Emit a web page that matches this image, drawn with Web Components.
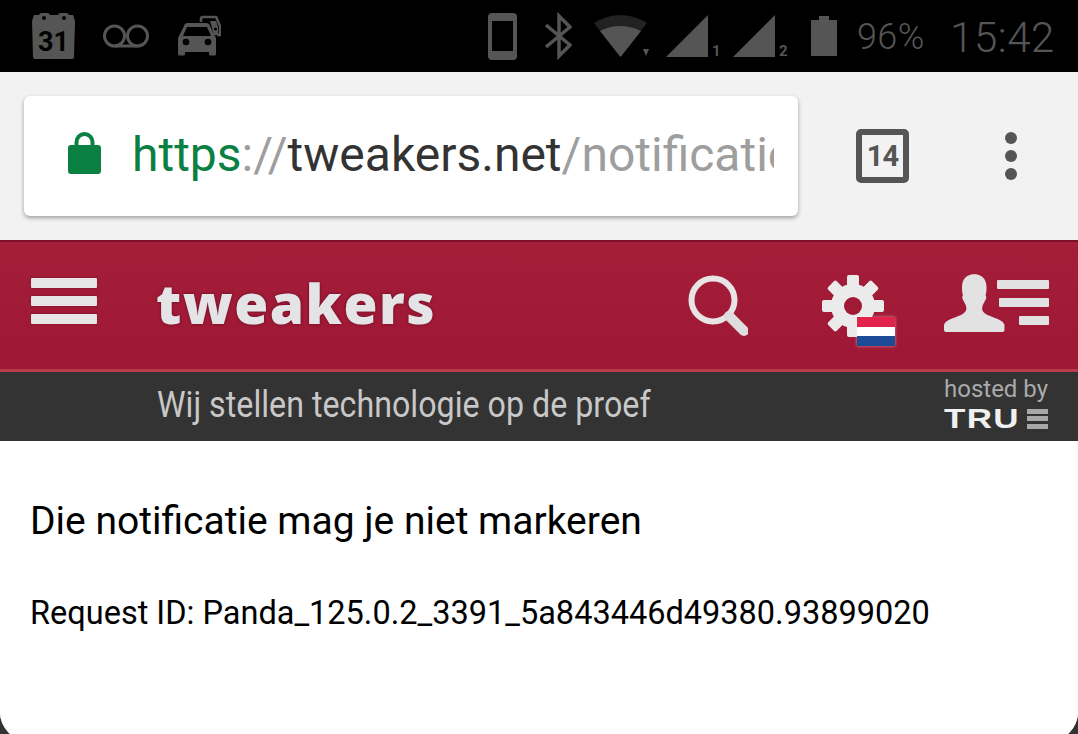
<!DOCTYPE html>
<html lang="nl">
<head>
<meta charset="utf-8">
<title>Tweakers</title>
<style>
html, body { margin: 0; height: 734px; overflow: hidden; background: #333; }
</style>
</head>
<body>
<app-screen>
    <status-bar></status-bar>
    <browser-toolbar></browser-toolbar>
    <site-header></site-header>
    <site-tagline>Wij stellen technologie op de proef</site-tagline>
    <error-message request-id="Panda_125.0.2_3391_5a843446d49380.93899020">Die notificatie mag je niet markeren</error-message>
</app-screen>

<script>
const define = (name, html) => {
    customElements.define(name, class extends HTMLElement {
        constructor() {
            super();
            this.attachShadow({mode: 'open'}).innerHTML = html;
        }
    });
};

define('app-screen', `
    <style>
    :host {
        display: flex;
        flex-direction: column;
        height: 741px;
        background: #fff;
        border-radius: 0 0 29px 29px;
        overflow: hidden;
        font-family: Roboto, "Liberation Sans", sans-serif;
    }
    </style>
    <slot></slot>
`);

define('status-bar', `
    <style>
    :host {
        display: flex;
        align-items: flex-start;
        height: 72px;
        background: #000;
        color: #555;
        flex: none;
    }
    svg { display: block; flex: none; fill: #555; }
    .cal-num { font: 700 27px Roboto, sans-serif; fill: #000; }
    .sim { font: 700 15px Roboto, sans-serif; fill: #555; }
    .left { display: flex; padding-left: 31px; }
    .right { display: flex; margin-left: auto; }
    .pct { font-size: 36px; font-weight: 300; line-height: 74px; margin-left: 20px; width: 68px; letter-spacing: .4px; }
    .time { font-size: 42px; font-weight: 300; line-height: 76px; margin-left: 25px; margin-right: 23px; letter-spacing: .6px; }
    </style>
    <div class="left">
        <svg width="46" height="72" viewBox="0 0 46 72" style="margin-right:26px">
            <path d="M3 15h5a3 3 0 0 1 3-2h5a3 3 0 0 1 3 2h8a3 3 0 0 1 3-2h5a3 3 0 0 1 3 2h4l2 6-1 36a2 2 0 0 1-2 2H4a2 2 0 0 1-2-2L1 21z"/>
            <circle cx="13" cy="18" r="2" fill="#000"/><circle cx="33" cy="18" r="2" fill="#000"/>
            <text class="cal-num" x="7" y="51">31</text>
        </svg>
        <svg width="46" height="72" viewBox="0 0 46 72" style="margin-right:28px" fill="none">
            <circle cx="11.500" cy="36" r="10" fill="none" stroke="#555" stroke-width="3"/>
            <circle cx="34.500" cy="36" r="10" fill="none" stroke="#555" stroke-width="3"/>
            <rect x="11.500" y="44.500" width="23" height="3"/>
        </svg>
        <svg width="44" height="72" viewBox="0 0 44 72">
            <path d="M1 54V38l6-12a4 4 0 0 1 4-3h18a4 4 0 0 1 4 3l6 12v16a1.500 1.500 0 0 1-1.500 1.500h-4a1.500 1.500 0 0 1-1.500-1.500v-2H8v2a1.500 1.500 0 0 1-1.500 1.500h-4A1.500 1.500 0 0 1 1 54z"/>
            <path d="M6 36l4-9h20l4 9z" fill="#000"/>
            <circle cx="9" cy="42" r="3.300" fill="#000"/><circle cx="31" cy="42" r="3.300" fill="#000"/>
            <path d="M24 22v-3a2 2 0 0 1 2-2h12a2 2 0 0 1 2 2l3 7v9h-3" fill="none" stroke="#555" stroke-width="2.500"/>
            <path d="M33 21h6l2 6v8h-4z"/>
            <circle cx="38.500" cy="29" r="1.500" fill="#000"/>
        </svg>
    </div>
    <div class="right">
        <svg width="30" height="72" viewBox="0 0 30 72" style="margin-right:26px">
            <rect x="0" y="13" width="29" height="47" rx="4"/>
            <rect x="4" y="21" width="21" height="30" fill="#000"/>
        </svg>
        <svg width="28" height="72" viewBox="0 0 28 72" style="margin-right:22px" fill="none">
            <path d="M2 25l24 20-11 11V16l11 11L2 47" fill="none" stroke="#555" stroke-width="3.500"/>
        </svg>
        <svg width="55" height="72" viewBox="0 0 55 72" style="margin-right:17px">
            <path d="M0 23Q26 7 53 23L26.500 57z" fill="#222"/>
            <path d="M6 31Q26 21 47 31L26.500 57z"/>
            <path d="M49 49h6l-3 7z"/>
        </svg>
        <svg width="56" height="72" viewBox="0 0 56 72" style="margin-right:11px">
            <path d="M0 57L42 15v42z"/>
            <text class="sim" x="46" y="56">1</text>
        </svg>
        <svg width="56" height="72" viewBox="0 0 56 72" style="margin-right:22px">
            <path d="M0 57L42 15v42z"/>
            <text class="sim" x="46" y="56">2</text>
        </svg>
        <svg width="26" height="72" viewBox="0 0 26 72">
            <path d="M8 16h10v4h8v36H0V20h8z"/>
        </svg>
        <span class="pct">96%</span>
        <span class="time">15:42</span>
    </div>
`);

define('browser-toolbar', `
    <style>
    :host {
        display: flex;
        align-items: center;
        height: 168px;
        flex: none;
        box-sizing: border-box;
        padding-left: 24px;
        background: #f2f2f2;
    }
    .omnibox {
        display: flex;
        align-items: center;
        width: 774px;
        height: 120px;
        box-sizing: border-box;
        padding: 0 24px 0 44px;
        background: #fff;
        border-radius: 6px;
        box-shadow: 0 2px 4px rgba(0,0,0,.35);
    }
    .lock { flex: none; margin: -6px 31px 0 0; }
    .url {
        flex: 1;
        overflow: hidden;
        white-space: nowrap;
        font-size: 48px;
        line-height: 118px;
        margin-bottom: 2px;
        color: #9e9e9e;
    }
    .https { color: #0b8043; }
    .host { color: #333; }
    .tabs {
        flex: none;
        box-sizing: border-box;
        width: 53px;
        height: 54px;
        margin-left: 58px;
        border: 6px solid #555;
        border-radius: 5px;
        color: #555;
        font-weight: 700;
        font-size: 29px;
        line-height: 42px;
        text-align: center;
        letter-spacing: -1px;
    }
    .menu {
        flex: none;
        display: flex;
        flex-direction: column;
        gap: 6px;
        margin-left: 96px;
    }
    .menu i { width: 12px; height: 12px; border-radius: 50%; background: #555; }
    </style>
    <div class="omnibox">
        <svg class="lock" width="33" height="42" viewBox="0 0 33 42">
            <path fill="#0b8043" d="M3 13h3.500V10a10 10 0 0 1 20 0v3H30a3 3 0 0 1 3 3v23a3 3 0 0 1-3 3H3a3 3 0 0 1-3-3V16a3 3 0 0 1 3-3zm7.500 0h12V10a6 6 0 0 0-12 0z"/>
        </svg>
        <div class="url"><span class="https">https</span>://<span class="host">tweakers.net</span>/notificaties</div>
    </div>
    <div class="tabs">14</div>
    <div class="menu"><i></i><i></i><i></i></div>
`);

define('site-header', `
    <style>
    :host {
        display: flex;
        align-items: center;
        height: 132px;
        flex: none;
        box-sizing: border-box;
        background: linear-gradient(#a41e3a, #9e1734);
        border-top: 2px solid #7c1028;
        border-bottom: 3px solid #b73c4b;
    }
    svg { display: block; flex: none; }
    .burger {
        display: flex;
        flex-direction: column;
        gap: 8px;
        width: 66px;
        margin: -10px 59px 0 31px;
    }
    .burger i { height: 10px; background: #e6e6e6; border-radius: 1px; box-shadow: 0 0 2px rgba(70,0,20,.6); }
    .logo {
        width: 480px;
        font-family: "Open Sans", sans-serif;
        font-weight: 800;
        font-size: 55px;
        line-height: 60px;
        letter-spacing: 1.5px;
        color: #e4e4e6;
        text-shadow: 0 0 3px rgba(70,0,20,.7);
        margin-top: -6px;
        margin-right: 52px;
    }
    .gear { position: relative; width: 74px; height: 74px; margin: 10px 47px 0 74px; }
    .flag {
        position: absolute;
        left: 35px;
        top: 43px;
        width: 38px;
        height: 29px;
        box-shadow: 0 0 3px rgba(255,255,255,.5);
        background: linear-gradient(#e2244c 33%, #fff 33%, #fff 66%, #1c4c96 66%);
    }
    .person { margin-top: -4px; }
    </style>
    <div class="burger"><i></i><i></i><i></i></div>
    <div class="logo">tweakers</div>
    <svg class="search" width="60" height="62" viewBox="0 0 60 62" fill="none">
        <circle cx="25" cy="25" r="21.500" stroke="#e8e4e6" stroke-width="6"/>
        <path d="M41 41L56 56" stroke="#e0dcde" stroke-width="10" stroke-linecap="round"/>
    </svg>
    <div class="gear">
        <svg width="62" height="64" viewBox="-31 -32 62 64">
            <g fill="#ebebeb">
                <rect x="-6" y="-31" width="12" height="62" rx="2"/>
                <rect x="-6" y="-31" width="12" height="62" rx="2" transform="rotate(45)"/>
                <rect x="-6" y="-31" width="12" height="62" rx="2" transform="rotate(90)"/>
                <rect x="-6" y="-31" width="12" height="62" rx="2" transform="rotate(135)"/>
            </g>
            <circle r="15.500" fill="none" stroke="#ebebeb" stroke-width="13"/>
            <circle r="9" fill="#a01a36"/>
        </svg>
        <div class="flag"></div>
    </div>
    <svg class="person" width="107" height="62" viewBox="0 0 107 62" fill="#e2e2e2">
        <path d="M30.500 1c8 0 13 5 13 13 0 3 0 6-1 8 1 1 1 3 0 5-1 2-2 3-3 6-1 4 0 6 5 9 7 3 16 5 17 10v5a2 2 0 0 1-2 2H3a2 2 0 0 1-2-2v-5c1-5 10-7 17-10 5-3 6-5 5-9-1-3-2-4-3-6-1-2-1-4 0-5-1-2-1-5-1-8 0-8 5-13 13-13z"/>
        <rect x="54" y="7" width="52" height="9" rx="1"/>
        <rect x="56" y="25" width="50" height="9" rx="1"/>
        <rect x="76" y="43" width="30" height="9" rx="1"/>
    </svg>
`);

define('site-tagline', `
    <style>
    :host {
        display: flex;
        justify-content: space-between;
        height: 69px;
        flex: none;
        background: #333;
        color: #c8c8c8;
    }
    .text {
        display: block;
        margin-left: 157px;
        font-size: 36px;
        line-height: 67px;
        white-space: nowrap;
        transform: scaleX(.895);
        transform-origin: left;
    }
    .hosted {
        display: flex;
        flex: none;
        flex-direction: column;
        width: 104px;
        margin-right: 30px;
    }
    .by { font-size: 24px; line-height: 24px; margin-top: 5px; color: #aaa; white-space: nowrap; }
    .true { display: flex; align-items: center; height: 21px; margin-top: 7px; }
    .true b {
        font: 700 28px/21px "Liberation Sans", sans-serif;
        letter-spacing: 1px;
        color: #f0f0f0;
        transform: scaleX(1.25);
        transform-origin: left;
    }
    .bars { display: flex; flex-direction: column; gap: 2.500px; width: 21px; margin-left: auto; }
    .bars i { height: 5px; background: #a8a8a8; }
    </style>
    <span class="text"><slot></slot></span>
    <div class="hosted">
        <div class="by">hosted by</div>
        <div class="true"><b>TRU</b><div class="bars"><i></i><i></i><i></i></div></div>
    </div>
`);

customElements.define('error-message', class extends HTMLElement {
    constructor() {
        super();
        this.attachShadow({mode: 'open'}).innerHTML = `
            <style>
            :host {
                display: block;
                flex: 1;
                padding: 56px 30px 0;
                background: #fff;
                color: #000;
            }
            h1 { margin: 0 0 48px; font-size: 39px; font-weight: 400; line-height: 48px; }
            p { margin: 0; font-size: 32.500px; line-height: 40px; }
            </style>
            <h1><slot></slot></h1>
            <p>Request ID: <span id="id"></span></p>
        `;
        this.shadowRoot.getElementById('id').textContent = this.getAttribute('request-id');
    }
});
</script>
</body>
</html>
